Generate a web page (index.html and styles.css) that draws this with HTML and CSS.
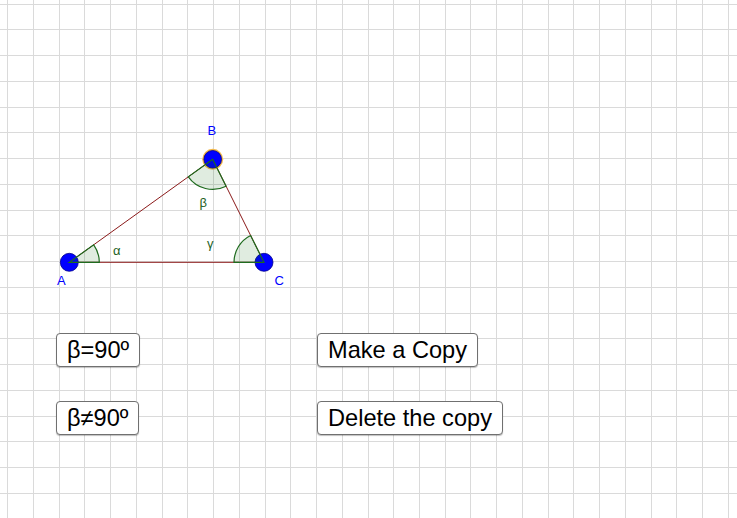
FILE: index.html
```html
<!DOCTYPE html>
<html lang="en">
<head>
    <meta charset="UTF-8">
    <meta name="viewport" content="width=device-width, initial-scale=1.0">
    <title>Triangle Copy</title>
    <link rel="stylesheet" href="styles.css">
</head>
<body>
    <div class="applet">
        <!-- Graphics view: grid + triangle -->
        <svg class="canvas" viewBox="0 0 737 518" width="737" height="518">
            <rect x="0" y="0" width="737" height="518" fill="#ffffff"/>
            <path id="grid" class="grid-line" d=""/>

            <!-- sides -->
            <line class="side" x1="69.3" y1="262.3" x2="212.7" y2="159.3"/>
            <line class="side" x1="212.7" y1="159.3" x2="264" y2="262.3"/>
            <line class="side" x1="69.3" y1="262.3" x2="264" y2="262.3"/>

            <!-- points -->
            <circle class="point" cx="69.3" cy="262.3" r="9"/>
            <circle class="selected" cx="212.7" cy="159.3" r="10.5"/>
            <circle class="point" cx="212.7" cy="159.3" r="8.8"/>
            <circle class="point" cx="264" cy="262.3" r="9"/>

            <!-- angle sectors -->
            <path class="angle" d="M 69.3 262.3 L 99.3 262.3 A 30 30 0 0 0 93.7 244.8 Z"/>
            <path class="angle" d="M 264 262.3 L 234 262.3 A 30 30 0 0 1 250.6 235.5 Z"/>
            <path class="angle" d="M 212.7 159.3 L 188.3 176.8 A 30 30 0 0 0 226.1 186.2 Z"/>

            <!-- labels -->
            <text class="label" x="57" y="285">A</text>
            <text class="label" x="207.5" y="135">B</text>
            <text class="label" x="274.5" y="285">C</text>
            <text class="angle-label" x="113" y="255">α</text>
            <text class="angle-label" x="199.5" y="207">β</text>
            <text class="angle-label" x="207" y="248">γ</text>
        </svg>

        <div class="controls">
            <button class="ggb-button">β=90º</button>
            <button class="ggb-button">Make a Copy</button>
            <button class="ggb-button">β≠90º</button>
            <button class="ggb-button">Delete the copy</button>
        </div>
    </div>

    <script>
        // Draw the grid, snapped to whole pixels so the lines stay crisp
        const grid = document.getElementById('grid');
        let d = '';
        for (let k = 0; k <= 28; k++) {
            const x = Math.round(7.3 + 25.73 * k) + 0.5;
            d += `M ${x} 0 V 518 `;
        }
        for (let k = 0; k <= 19; k++) {
            const y = Math.floor(4 + 25.75 * k) + 0.5;
            d += `M 0 ${y} H 737 `;
        }
        grid.setAttribute('d', d);
    </script>
</body>
</html>
```
FILE: styles.css
```css
body {
    margin: 0;
    background-color: #ffffff;
    font-family: "Liberation Sans", Arial, sans-serif;
}

.applet {
    position: relative;
    width: 737px;
    height: 518px;
    overflow: hidden;
}

.canvas {
    position: absolute;
    top: 0;
    left: 0;
    display: block;
}

.grid-line {
    fill: none;
    stroke: #dadada;
    stroke-width: 1;
    shape-rendering: crispEdges;
}

.side {
    stroke: #8b1a1a;
    stroke-width: 1;
}

.angle {
    fill: rgba(0, 100, 0, 0.12);
    stroke: #1e6b1e;
    stroke-width: 1.2;
}

.point {
    fill: #0000ff;
    stroke: #00008a;
    stroke-width: 0.8;
}

.selected {
    fill: #f2b84b;
}

.label {
    font-family: "Liberation Sans", Arial, sans-serif;
    font-size: 13px;
    fill: #0000ff;
}

.angle-label {
    font-family: "Liberation Sans", Arial, sans-serif;
    font-size: 13px;
    fill: #1e5f1e;
}

.controls {
    position: relative;
    display: grid;
    grid-template-columns: 261px auto;
    row-gap: 34px;
    justify-items: start;
    padding: 333px 0 0 56px;
}

.ggb-button {
    box-sizing: border-box;
    height: 34px;
    padding: 0 10px 0 10px;
    background-color: #ffffff;
    border: 1px solid #707070;
    border-radius: 4px;
    box-shadow: 0 1px 1px rgba(0, 0, 0, 0.25);
    color: #000000;
    font-family: "Liberation Sans", Arial, sans-serif;
    font-size: 23.6px;
    line-height: 32px;
    cursor: pointer;
}
```
